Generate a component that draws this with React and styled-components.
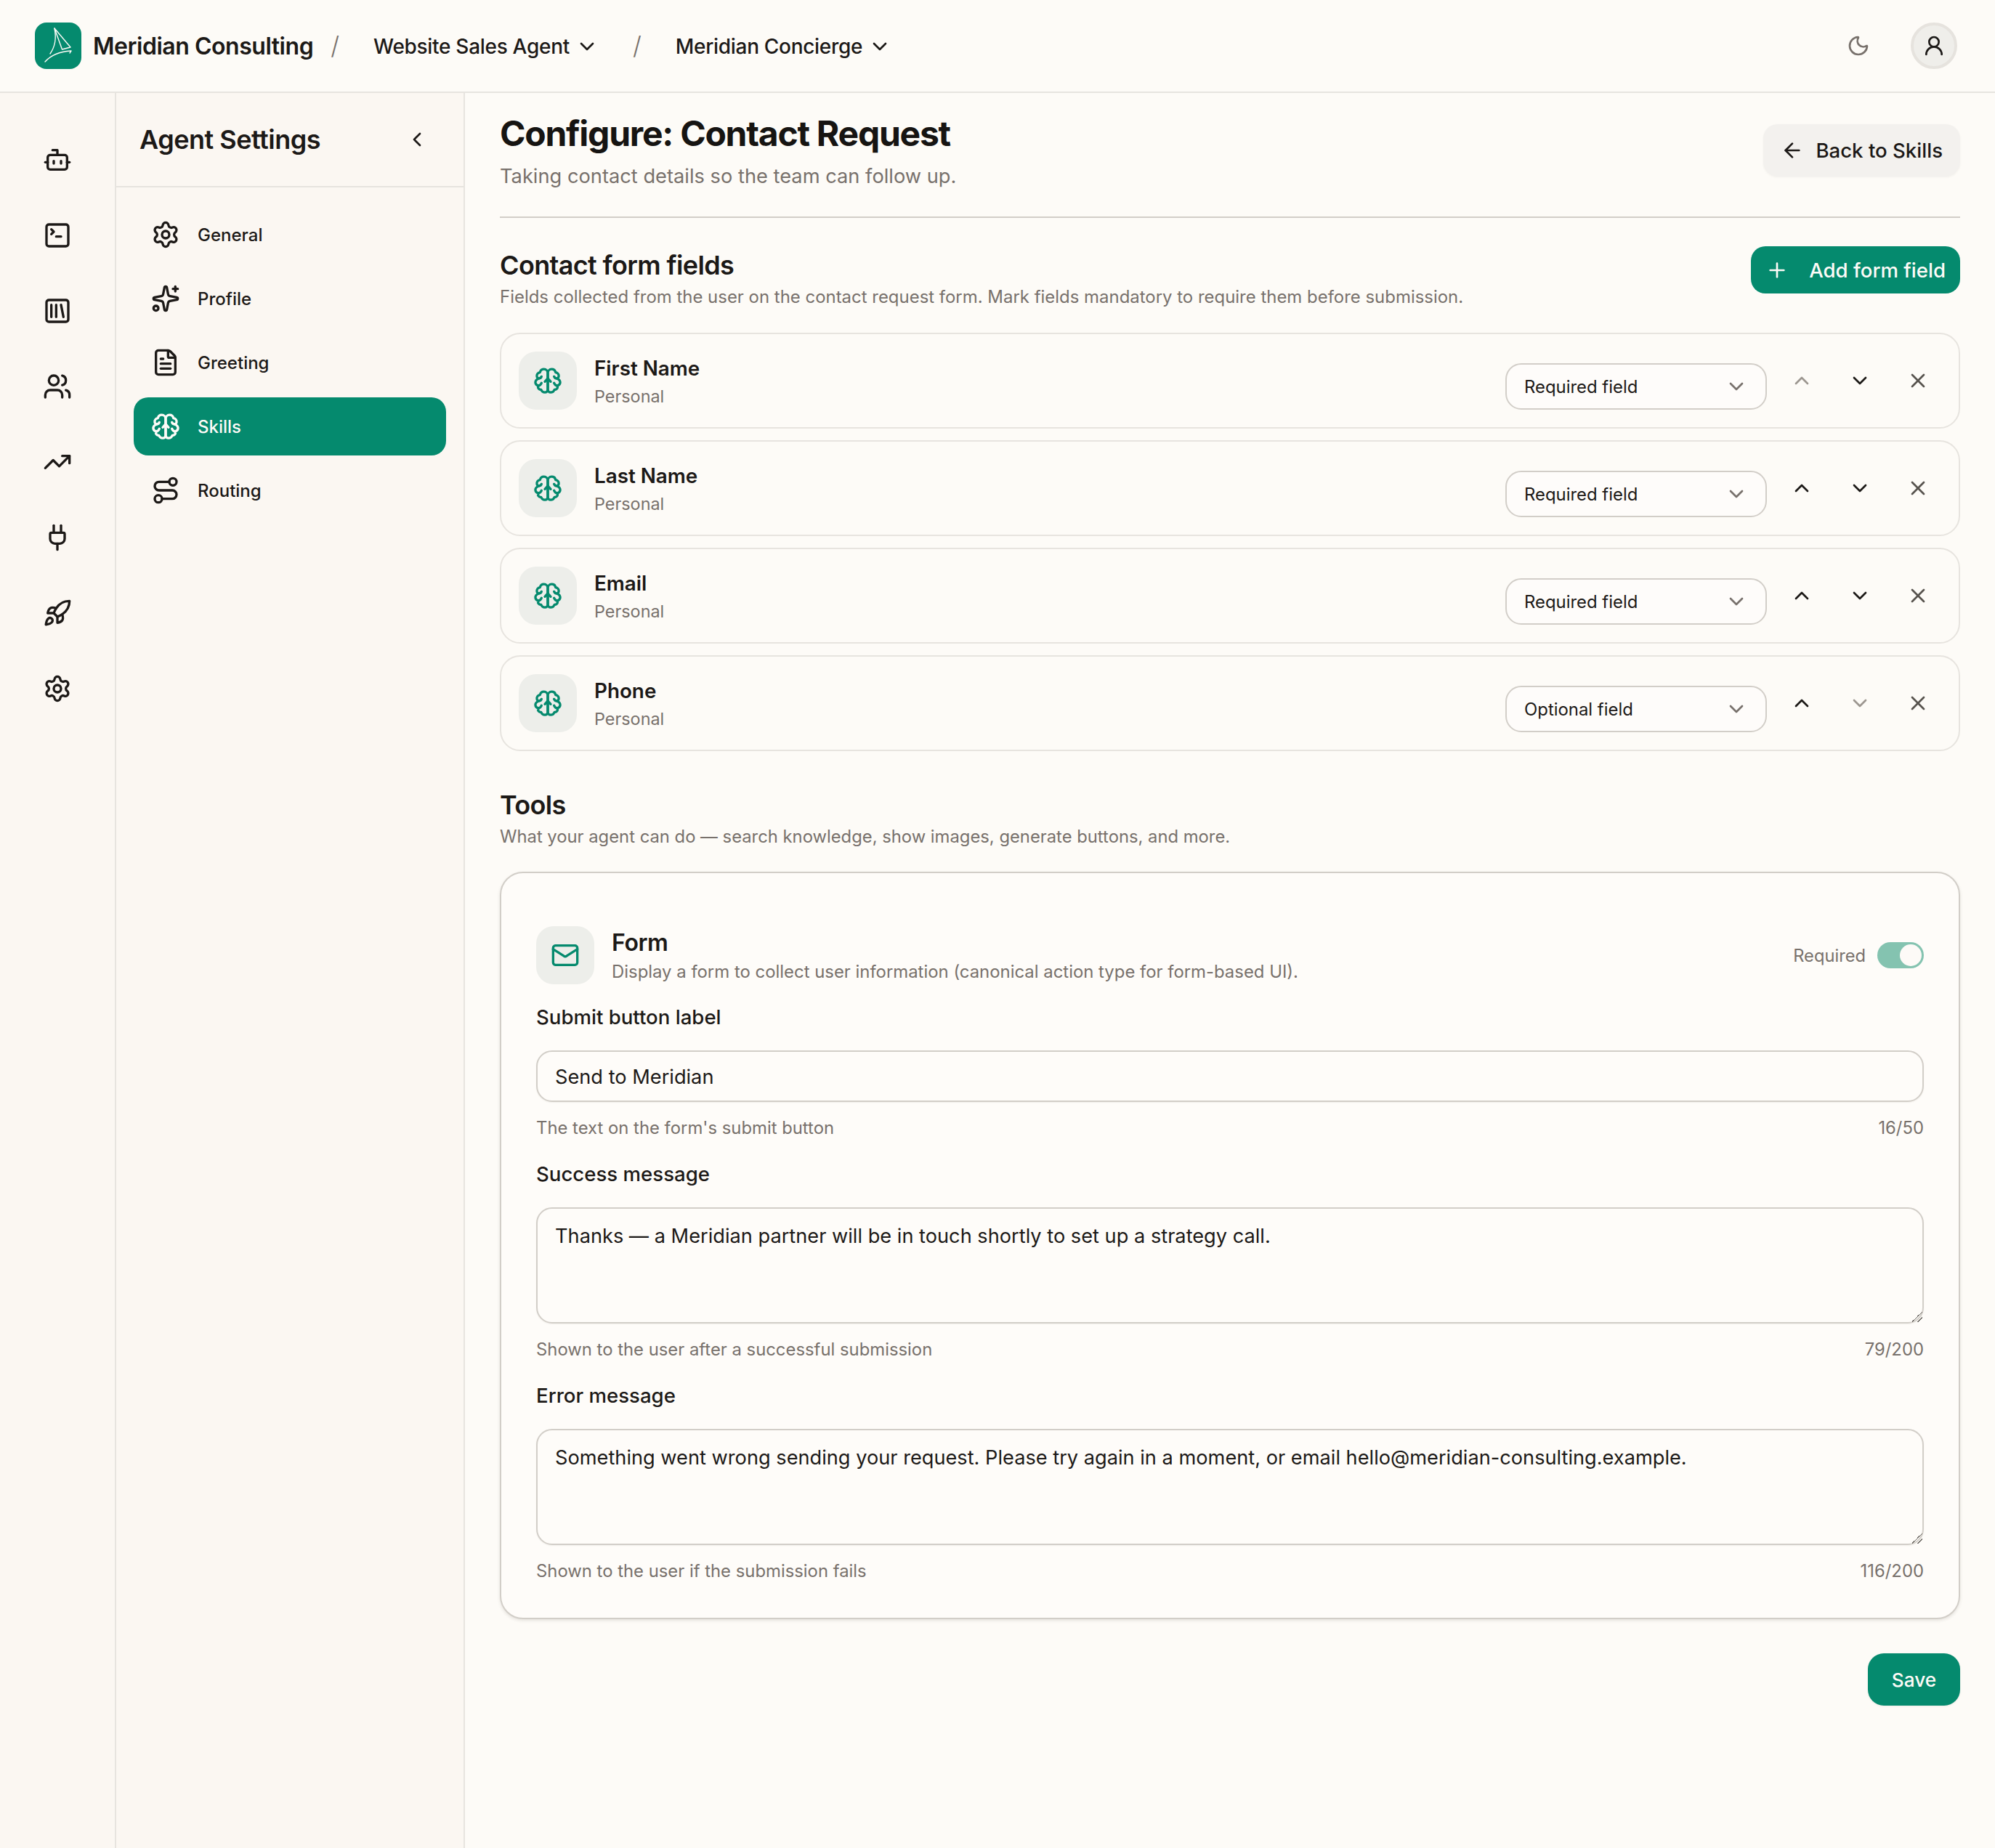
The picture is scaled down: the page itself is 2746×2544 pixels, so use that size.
import React from 'react';
import styled, { createGlobalStyle } from 'styled-components';
import {
  Bot, SquareTerminal, SquareLibrary, Users, TrendingUp, Plug, Rocket, Settings,
  Sparkles, FileText, Route, ChevronDown, ChevronUp, ChevronLeft, X, Plus, ArrowLeft,
  Moon, UserRound, Mail,
} from 'lucide-react';

const GREEN = '#058a6e';
const INK = '#1c1917';
const MUTED = '#78716c';
const LINE = '#e7e4df';
const FIELD_LINE = '#d2cec8';

const GlobalStyle = createGlobalStyle`
  html, body { margin: 0; padding: 0; background: #fdfbf7; }
  body { font-family: Inter, "Liberation Sans", sans-serif; color: ${INK}; }
  * { box-sizing: border-box; }
  button { font-family: inherit; }
`;

const Page = styled.div`
  min-height: 100vh;
  display: flex;
  flex-direction: column;
`;

const TopBar = styled.header`
  height: 128px;
  flex: none;
  display: flex;
  align-items: center;
  justify-content: space-between;
  padding: 0 52px 0 48px;
  border-bottom: 2px solid ${LINE};
  background: #fdfbf7;
`;

const Brand = styled.div`
  display: flex;
  align-items: center;
`;

const LogoTile = styled.div`
  width: 64px;
  height: 64px;
  border-radius: 16px;
  background: ${GREEN};
  margin-right: 16px;
  flex: none;
`;

const BrandName = styled.span`
  padding-top: 2px;
  font-size: 32px;
  font-weight: 600;
  letter-spacing: -0.47px;
  line-height: 40px;
`;

const Sep = styled.span`
  font-size: 34px;
  line-height: 40px;
  font-weight: 300;
  color: ${MUTED};
  margin-left: ${p => p.$lead}px;
`;

const Crumb = styled.button`
  border: 0;
  background: none;
  padding: 2px 47px 0;
  display: flex;
  align-items: center;
  gap: 8px;
  color: ${INK};
  font-size: 28px;
  font-weight: 500;
  letter-spacing: -0.3px;
  line-height: 40px;
`;

const TopActions = styled.div`
  display: flex;
  align-items: center;
  gap: 40px;
`;

const ThemeButton = styled.button`
  width: 64px;
  height: 64px;
  border: 0;
  background: none;
  color: ${MUTED};
  display: grid;
  place-items: center;
  padding: 0;
`;

const Avatar = styled.button`
  width: 64px;
  height: 64px;
  border-radius: 50%;
  border: 4px solid #e6e3de;
  background: #efeeea;
  color: ${INK};
  display: grid;
  place-items: center;
  padding: 0;
`;

const Body = styled.div`
  flex: 1;
  display: flex;
  min-height: 0;
`;

const Rail = styled.nav`
  width: 160px;
  flex: none;
  display: flex;
  flex-direction: column;
  gap: 16px;
  padding-top: 48px;
  background: #fbf7f2;
  border-right: 2px solid ${LINE};
`;

const RailButton = styled.button`
  height: 88px;
  border: 0;
  background: none;
  padding: 0;
  display: grid;
  place-items: center;
  color: ${INK};
`;

const SettingsPanel = styled.aside`
  width: 480px;
  flex: none;
  background: #fbf7f2;
  border-right: 2px solid ${LINE};
`;

const PanelHead = styled.div`
  height: 130px;
  display: flex;
  align-items: center;
  justify-content: space-between;
  padding: 0 32px;
  border-bottom: 2px solid ${LINE};
`;

const PanelTitle = styled.h2`
  margin: 0;
  font-size: 36px;
  font-weight: 600;
  letter-spacing: -0.5px;
  line-height: 48px;
`;

const Collapse = styled.button`
  width: 64px;
  height: 64px;
  border: 0;
  background: none;
  padding: 0;
  display: grid;
  place-items: center;
  color: ${INK};
`;

const NavList = styled.div`
  display: flex;
  flex-direction: column;
  gap: 8px;
  padding: 25px 24px;
`;

const NavItem = styled.a`
  height: 80px;
  display: flex;
  align-items: center;
  gap: 24px;
  padding-left: 24px;
  border-radius: 20px;
  font-size: 24px;
  font-weight: 500;
  color: ${p => (p.$active ? '#fdfbf7' : INK)};
  background: ${p => (p.$active ? GREEN : 'transparent')};
`;

const Main = styled.main`
  flex: 1;
  min-width: 0;
  padding: 28px 48px 48px;
`;

const PageHead = styled.div`
  display: flex;
  justify-content: space-between;
  align-items: flex-start;
  padding-bottom: 36px;
  border-bottom: 2px solid ${FIELD_LINE};
`;

const PageTitle = styled.h1`
  margin: 0;
  font-size: 48px;
  font-weight: 700;
  letter-spacing: -1.25px;
  line-height: 56px;
  color: #161412;
`;

const PageSub = styled.p`
  margin: 12px 0 0;
  font-size: 27.25px;
  line-height: 38px;
  color: ${MUTED};
`;

const BackButton = styled.button`
  margin-top: 15px;
  height: 72px;
  display: flex;
  align-items: center;
  gap: 16px;
  padding: 0 24px;
  border: 0;
  border-radius: 20px;
  background: #f3f1ee;
  box-shadow: 0 1px 3px rgba(60, 50, 40, 0.05);
  color: ${INK};
  font-size: 27.6px;
  font-weight: 500;
`;

const SectionHead = styled.div`
  display: flex;
  justify-content: space-between;
  align-items: flex-start;
  margin-top: ${p => p.$top}px;
`;

const SectionTitle = styled.h3`
  margin: ${p => p.$offset || 0}px 0 0;
  font-size: 36px;
  font-weight: 600;
  letter-spacing: -0.65px;
  line-height: 48px;
`;

const SectionSub = styled.p`
  margin: 2px 0 0;
  font-size: ${p => p.$size}px;
  line-height: 36px;
  color: ${MUTED};
`;

const AddButton = styled.button`
  height: 65px;
  display: flex;
  align-items: center;
  gap: 28px;
  padding: 0 20px;
  border: 0;
  border-radius: 20px;
  background: ${GREEN};
  color: #fdfbf7;
  font-size: 27.6px;
  font-weight: 500;
`;

const FieldList = styled.div`
  display: flex;
  flex-direction: column;
  gap: 16px;
  margin-top: 31px;
`;

const FieldCard = styled.div`
  height: 132px;
  display: flex;
  align-items: center;
  padding: 0 24px;
  border: 2px solid ${LINE};
  border-radius: 28px;
  background: #fdfbf7;
`;

const IconTile = styled.div`
  width: 80px;
  height: 80px;
  flex: none;
  display: grid;
  place-items: center;
  border-radius: 24px;
  background: #edeeea;
  color: ${GREEN};
`;

const FieldText = styled.div`
  flex: 1;
  margin: 3px 0 0 24px;
`;

const FieldName = styled.div`
  font-size: 27.8px;
  font-weight: 600;
  line-height: 40px;
`;

const FieldGroup = styled.div`
  margin-top: 1px;
  font-size: 23.4px;
  line-height: 36px;
  color: ${MUTED};
`;

const SelectBox = styled.button`
  width: 360px;
  height: 64px;
  margin-top: 16px;
  display: flex;
  align-items: center;
  justify-content: space-between;
  padding: 0 24px;
  border: 2px solid ${FIELD_LINE};
  border-radius: 22px;
  background: #fefcfa;
  color: ${INK};
  font-size: 23.9px;
  text-align: left;
`;

const RowActions = styled.div`
  display: flex;
  gap: 16px;
  margin-left: 16px;
`;

const RowAction = styled.button`
  width: 64px;
  height: 64px;
  padding: 0;
  border: 0;
  background: none;
  display: grid;
  place-items: center;
  color: ${p => (p.$disabled ? '#9c9690' : p.$soft ? '#57534e' : INK)};
`;

const ToolCard = styled.section`
  margin-top: 30px;
  padding: 72px 48px 46px;
  border: 2px solid ${FIELD_LINE};
  border-radius: 32px;
  background: #fefcf9;
  box-shadow: 0 2px 4px rgba(60, 50, 40, 0.12);
`;

const ToolHead = styled.div`
  display: flex;
  align-items: center;
`;

const ToolText = styled.div`
  flex: 1;
  margin: 2px 0 0 24px;
`;

const ToolName = styled.div`
  font-size: 32px;
  font-weight: 600;
  letter-spacing: -0.4px;
  line-height: 44px;
`;

const ToolDesc = styled.div`
  font-size: 23.9px;
  line-height: 36px;
  color: ${MUTED};
`;

const RequiredWrap = styled.div`
  display: flex;
  align-items: center;
  gap: 16px;
  font-size: 23.7px;
  color: ${MUTED};
`;

const Toggle = styled.div`
  width: 64px;
  height: 36px;
  display: flex;
  justify-content: flex-end;
  align-items: center;
  padding-right: 3px;
  border-radius: 18px;
  background: #84c3b0;
`;

const Knob = styled.div`
  width: 30px;
  height: 30px;
  border-radius: 50%;
  background: #fdfaf7;
`;

const FieldStack = styled.div`
  display: flex;
  flex-direction: column;
  gap: 25px;
  margin-top: 24px;
`;

const FieldLabel = styled.label`
  display: block;
  font-size: 27.6px;
  font-weight: 500;
  line-height: 40px;
`;

const TextInput = styled.input`
  display: block;
  width: 100%;
  height: 71px;
  margin-top: 26px;
  padding: 2px 24px 0;
  border: 2px solid ${FIELD_LINE};
  border-radius: 22px;
  background: #fefcf9;
  box-shadow: 0 1px 2px rgba(60, 50, 40, 0.06);
  color: ${INK};
  font: 400 27.2px/36px Inter, "Liberation Sans", sans-serif;
  outline: none;
`;

const TextArea = styled.textarea`
  display: block;
  width: 100%;
  height: 160px;
  margin-top: 26px;
  padding: 20px 24px 16px;
  border: 2px solid ${FIELD_LINE};
  border-radius: 22px;
  background: #fefcf9;
  box-shadow: 0 1px 2px rgba(60, 50, 40, 0.06);
  color: ${INK};
  font: 400 27.2px/36px Inter, "Liberation Sans", sans-serif;
  resize: vertical;
  outline: none;

  &::-webkit-resizer {
    background: linear-gradient(135deg, transparent 50%, #6b6762 50% 56%, transparent 56% 76%, #6b6762 76% 82%, transparent 82%);
  }
`;

const HelpRow = styled.div`
  display: flex;
  justify-content: space-between;
  margin-top: 18px;
  font-size: 23.85px;
  line-height: 36px;
  color: ${MUTED};
`;

const Footer = styled.div`
  display: flex;
  justify-content: flex-end;
  margin-top: 47px;
`;

const SaveButton = styled.button`
  width: 127px;
  height: 72px;
  border: 0;
  border-radius: 22px;
  background: ${GREEN};
  box-shadow: 0 1px 3px rgba(60, 50, 40, 0.08);
  color: #fdfbf7;
  font-size: 26.2px;
  font-weight: 500;
`;

/* Line-drawn sailboat mark */
const SailMark = () => (
  <svg width="64" height="64" viewBox="0 0 64 64" fill="none" stroke="#fdfbf7" strokeLinecap="round" strokeLinejoin="round">
    <path d="M27 8 L49 34 L37.5 37 Z" strokeWidth="1.4" />
    <path d="M27 8 C29.5 20 28 33 21 43" strokeWidth="1.4" />
    <path d="M14 54 C22 45 34 40 50 39 L48 42" strokeWidth="1.4" />
  </svg>
);

const BrainHalf = () => (
  <>
    <path d="M12 6C12 3.9 10.6 2.5 8.8 2.5C7.2 2.5 5.9 3.6 5.6 5.1C3.9 5.4 2.7 6.9 3 8.6C3.1 9.4 3.7 9.9 4.6 10.2C2.8 10.9 1.6 12.3 1.8 13.8C1.9 14.9 2.9 15.8 4.2 16.2C3.4 18.2 4.7 19.6 6.5 19.5C7 20.8 8.2 21.7 9.6 21.7C11 21.7 12 20.7 12 19.3V6Z" />
    <path d="M4.6 10.2C5.6 10.2 6.5 9.6 6.8 8.6" />
    <path d="M4.2 16.2C5.4 16 6.4 15.2 6.8 14" />
    <path d="M12 10.2L9.6 12.8" />
  </>
);

const BrainIcon = ({ size = 40 }) => (
  <svg width={size} height={size} viewBox="0 0 24 24" fill="none" stroke="currentColor" strokeWidth="2" strokeLinecap="round" strokeLinejoin="round">
    <BrainHalf />
    <g transform="matrix(-1 0 0 1 24 0)"><BrainHalf /></g>
  </svg>
);

const railIcons = [Bot, SquareTerminal, SquareLibrary, Users, TrendingUp, Plug, Rocket, Settings];

const navItems = [
  { label: 'General', Icon: Settings },
  { label: 'Profile', Icon: Sparkles },
  { label: 'Greeting', Icon: FileText },
  { label: 'Skills', Icon: BrainIcon, active: true },
  { label: 'Routing', Icon: Route },
];

const formFields = [
  { name: 'First Name', mode: 'Required field', first: true },
  { name: 'Last Name', mode: 'Required field' },
  { name: 'Email', mode: 'Required field' },
  { name: 'Phone', mode: 'Optional field', last: true },
];

const settings = [
  { label: 'Submit button label', help: "The text on the form's submit button", count: '16/50', value: 'Send to Meridian' },
  { label: 'Success message', help: 'Shown to the user after a successful submission', count: '79/200', value: 'Thanks — a Meridian partner will be in touch shortly to set up a strategy call.', multi: true },
  { label: 'Error message', help: 'Shown to the user if the submission fails', count: '116/200', value: 'Something went wrong sending your request. Please try again in a moment, or email hello@meridian-consulting.example.', multi: true },
];

export default function App() {
  return (
    <Page>
      <GlobalStyle />
      <TopBar>
        <Brand>
          <LogoTile><SailMark /></LogoTile>
          <BrandName>Meridian Consulting</BrandName>
          <Sep $lead={24}>/</Sep>
          <Crumb>Website Sales Agent <ChevronDown size={32} /></Crumb>
          <Sep $lead={0}>/</Sep>
          <Crumb>Meridian Concierge <ChevronDown size={32} /></Crumb>
        </Brand>
        <TopActions>
          <ThemeButton><Moon size={32} /></ThemeButton>
          <Avatar><UserRound size={32} /></Avatar>
        </TopActions>
      </TopBar>
      <Body>
        <Rail>
          {railIcons.map((Icon, i) => (
            <RailButton key={i}><Icon size={40} /></RailButton>
          ))}
        </Rail>
        <SettingsPanel>
          <PanelHead>
            <PanelTitle>Agent Settings</PanelTitle>
            <Collapse><ChevronLeft size={32} /></Collapse>
          </PanelHead>
          <NavList>
            {navItems.map(({ label, Icon, active }) => (
              <NavItem key={label} $active={active}><Icon size={40} />{label}</NavItem>
            ))}
          </NavList>
        </SettingsPanel>
        <Main>
          <PageHead>
            <div>
              <PageTitle>Configure: Contact Request</PageTitle>
              <PageSub>Taking contact details so the team can follow up.</PageSub>
            </div>
            <BackButton><ArrowLeft size={32} />Back to Skills</BackButton>
          </PageHead>

          <SectionHead $top={39}>
            <div>
              <SectionTitle $offset={2}>Contact form fields</SectionTitle>
              <SectionSub $size={23.95}>Fields collected from the user on the contact request form. Mark fields mandatory to require them before submission.</SectionSub>
            </div>
            <AddButton><Plus size={32} />Add form field</AddButton>
          </SectionHead>

          <FieldList>
            {formFields.map(f => (
              <FieldCard key={f.name}>
                <IconTile><BrainIcon /></IconTile>
                <FieldText>
                  <FieldName>{f.name}</FieldName>
                  <FieldGroup>Personal</FieldGroup>
                </FieldText>
                <SelectBox>{f.mode}<ChevronDown size={32} color={MUTED} /></SelectBox>
                <RowActions>
                  <RowAction $disabled={f.first}><ChevronUp size={32} /></RowAction>
                  <RowAction $disabled={f.last}><ChevronDown size={32} /></RowAction>
                  <RowAction $soft><X size={32} /></RowAction>
                </RowActions>
              </FieldCard>
            ))}
          </FieldList>

          <SectionHead $top={50}>
            <div>
              <SectionTitle>Tools</SectionTitle>
              <SectionSub $size={23.8}>What your agent can do — search knowledge, show images, generate buttons, and more.</SectionSub>
            </div>
          </SectionHead>

          <ToolCard>
            <ToolHead>
              <IconTile><Mail size={40} /></IconTile>
              <ToolText>
                <ToolName>Form</ToolName>
                <ToolDesc>Display a form to collect user information (canonical action type for form-based UI).</ToolDesc>
              </ToolText>
              <RequiredWrap>Required<Toggle><Knob /></Toggle></RequiredWrap>
            </ToolHead>
            <FieldStack>
              {settings.map(s => (
                <div key={s.label}>
                  <FieldLabel>{s.label}</FieldLabel>
                  {s.multi ? <TextArea defaultValue={s.value} /> : <TextInput defaultValue={s.value} />}
                  <HelpRow><span>{s.help}</span><span>{s.count}</span></HelpRow>
                </div>
              ))}
            </FieldStack>
          </ToolCard>

          <Footer><SaveButton>Save</SaveButton></Footer>
        </Main>
      </Body>
    </Page>
  );
}
